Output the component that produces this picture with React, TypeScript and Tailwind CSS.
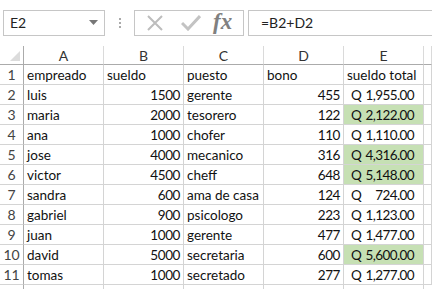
const rows: [string, number, string, number, string, boolean][] = [
  ['luis', 1500, 'gerente', 455, '1,955.00', false],
  ['maria', 2000, 'tesorero', 122, '2,122.00', true],
  ['ana', 1000, 'chofer', 110, '1,110.00', false],
  ['jose', 4000, 'mecanico', 316, '4,316.00', true],
  ['victor', 4500, 'cheff', 648, '5,148.00', true],
  ['sandra', 600, 'ama de casa', 124, '724.00', false],
  ['gabriel', 900, 'psicologo', 223, '1,123.00', false],
  ['juan', 1000, 'gerente', 477, '1,477.00', false],
  ['david', 5000, 'secretaria', 600, '5,600.00', true],
  ['tomas', 1000, 'secretado', 277, '1,277.00', false],
];

const font = { fontFamily: 'Lato, "Liberation Sans", sans-serif' };

function Cell({ children, className = '' }: { children?: React.ReactNode; className?: string }) {
  return (
    <div className={`h-5 border-r border-b border-[#d4d4d4] text-[13.5px] leading-5 text-[#111] whitespace-nowrap overflow-hidden ${className}`}>
      {children}
    </div>
  );
}

function RowHead({ n }: { n: number }) {
  return (
    <div className="h-5 border-r border-b border-[#d4d4d4] border-r-[#ababab] text-[14px] leading-5 text-[#444] text-center">
      {n}
    </div>
  );
}

export default function App() {
  return (
    <div className="w-[432px] h-[289px] bg-white overflow-hidden" style={font}>
      {/* formula bar */}
      <div className="flex items-center h-[46px] pl-[3px] pb-[1px]">
        <div className="flex items-center justify-between w-[102px] h-[26px] border border-[#c6c6c6] pl-[6px] pr-[6px] text-[14px] text-[#222]">
          <span>E2</span>
          <svg width="9" height="5" viewBox="0 0 9 5">
            <path d="M0 0h9L4.5 5z" fill="#777" />
          </svg>
        </div>
        <div className="flex flex-col gap-[2px] ml-[14px] mr-[13px]">
          <div className="w-[2px] h-[2px] bg-[#aaa]" />
          <div className="w-[2px] h-[2px] bg-[#aaa]" />
          <div className="w-[2px] h-[2px] bg-[#aaa]" />
        </div>
        <div className="flex items-center w-[110px] h-[26px] border border-[#c6c6c6]">
          <svg width="18" height="16" viewBox="0 0 18 16" className="ml-[11px]">
            <path d="M2 1L16 15M16 1L2 15" stroke="#bdbdbd" strokeWidth="2" />
          </svg>
          <svg width="20" height="16" viewBox="0 0 20 16" className="ml-[17px]">
            <path d="M1 8L7 14L19 1" stroke="#c3c3c3" strokeWidth="3" fill="none" />
          </svg>
          <span
            className="ml-[12px] text-[23px] italic font-bold text-[#808080] leading-none -mt-[3px]"
            style={{ fontFamily: '"Liberation Serif", serif' }}
          >
            fx
          </span>
        </div>
        <div className="flex items-center flex-1 h-[26px] ml-[4px] border-y border-l border-[#c6c6c6] pl-[12px] text-[14px] text-[#222]">
          =B2+D2
        </div>
      </div>

      {/* grid */}
      <div className="grid grid-cols-[24px_80px_80px_80px_80px_80px_1fr]">
        <div className="h-[19px] border-r border-b border-[#ababab] relative">
          <svg width="10" height="10" viewBox="0 0 10 10" className="absolute right-[3px] bottom-[3px]">
            <path d="M10 0V10H0z" fill="#dcdcdc" />
          </svg>
        </div>
        {['A', 'B', 'C', 'D', 'E', ''].map((h, i) => (
          <div
            key={i}
            className="h-[19px] border-r border-b border-r-[#dadada] border-b-[#ababab] text-center text-[14px] leading-[19px] text-[#333]"
          >
            {h}
          </div>
        ))}

        <RowHead n={1} />
        <Cell className="pl-[3px]">empreado</Cell>
        <Cell className="pl-[3px]">sueldo</Cell>
        <Cell className="pl-[3px]">puesto</Cell>
        <Cell className="pl-[3px]">bono</Cell>
        <Cell className="pl-[3px]">sueldo total</Cell>
        <Cell />

        {rows.map((r, i) => (
          <div key={i} className="contents">
            <RowHead n={i + 2} />
            <Cell className="pl-[3px]">{r[0]}</Cell>
            <Cell className="text-right pr-[3px] tracking-[-0.4px]">{r[1]}</Cell>
            <Cell className="pl-[3px]">{r[2]}</Cell>
            <Cell className="text-right pr-[3px] tracking-[-0.4px]">{r[3]}</Cell>
            <Cell className={`flex justify-between pl-[7px] pr-[9px] tracking-[-0.6px] ${r[5] ? 'bg-[#c6e0b4]' : ''}`}>
              <span>Q</span>
              <span>{r[4]}</span>
            </Cell>
            <Cell />
          </div>
        ))}

        <div className="h-5 border-r border-[#ababab]" />
        <div className="h-5 border-r border-[#d4d4d4]" />
        <div className="h-5 border-r border-[#d4d4d4]" />
        <div className="h-5 border-r border-[#d4d4d4]" />
        <div className="h-5 border-r border-[#d4d4d4]" />
        <div className="h-5 border-r border-[#d4d4d4]" />
      </div>
    </div>
  );
}
